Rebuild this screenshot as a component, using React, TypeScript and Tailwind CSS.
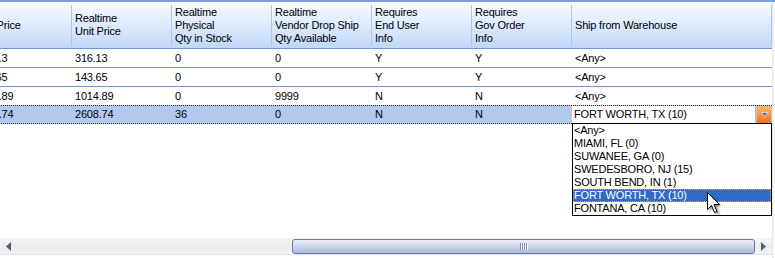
import React from "react";

const headers: string[][] = [
  ["Unit Price"],
  ["Realtime", "Unit Price"],
  ["Realtime", "Physical", "Qty in Stock"],
  ["Realtime", "Vendor Drop Ship", "Qty Available"],
  ["Requires", "End User", "Info"],
  ["Requires", "Gov Order", "Info"],
  ["Ship from Warehouse"],
];

const rows: string[][] = [
  ["316.13", "316.13", "0", "0", "Y", "Y", "<Any>"],
  ["143.65", "143.65", "0", "0", "Y", "Y", "<Any>"],
  ["1014.89", "1014.89", "0", "9999", "N", "N", "<Any>"],
];

const selected = ["2608.74", "2608.74", "36", "0", "N", "N"];

const warehouses = [
  "<Any>",
  "MIAMI, FL (0)",
  "SUWANEE, GA (0)",
  "SWEDESBORO, NJ (15)",
  "SOUTH BEND, IN (1)",
  "FORT WORTH, TX (10)",
  "FONTANA, CA (10)",
];

function Cursor() {
  return (
    <svg width="20" height="28" viewBox="0 0 20 28">
      <defs>
        <filter id="sh" x="-50%" y="-50%" width="200%" height="200%">
          <feGaussianBlur stdDeviation="1.3" />
        </filter>
      </defs>
      <path
        d="M3.5 3.5 L3.5 20.5 L7.5 16.5 L10.5 23.5 L13.5 22.5 L10.5 15.5 L15.5 15.5 Z"
        fill="#000"
        opacity="0.45"
        filter="url(#sh)"
      />
      <path
        d="M1.5 1.5 L1.5 18.5 L5.5 14.5 L8.5 21.5 L11 20.5 L8 13.5 L13.5 13.5 Z"
        fill="#fff"
        stroke="#000"
        strokeWidth="1"
        strokeLinejoin="miter"
      />
    </svg>
  );
}

export default function App() {
  return (
    <div className="relative w-[775px] h-[258px] bg-white overflow-hidden flex text-black text-[11px] tracking-[-0.2px] font-['Liberation_Sans',Arial,sans-serif]">
      <div className="w-[772px] h-full flex flex-col overflow-hidden">
        <div className="h-[2px] bg-[#7d9fd3] shrink-0" />

        {/* header */}
        <div className="h-[46px] shrink-0 flex ml-[-28px] bg-linear-to-b from-[#f8fbff] to-[#c2d8f8] border-b border-[#6e98d6] box-content">
          {headers.map((h, i) => (
            <div key={i} className={`flex items-center shrink-0 ${i === 6 ? "w-[200px]" : "w-[100px]"}`}>
              <div className="flex-1 pl-[3px] leading-[13px] whitespace-nowrap overflow-hidden">
                {h.map((l, j) => (
                  <div key={j}>{l}</div>
                ))}
              </div>
              <div className="w-px h-[41px] bg-[#a9c8f0]" />
            </div>
          ))}
        </div>

        {/* rows */}
        {rows.map((r, i) => (
          <div
            key={i}
            className={`h-[18px] shrink-0 flex ml-[-28px] box-content ${i < 2 ? "border-b border-[#6e98d6]" : ""}`}
          >
            {r.map((c, j) => (
              <div
                key={j}
                className={`shrink-0 pl-[3px] leading-[18px] whitespace-nowrap ${j === 6 ? "w-[200px]" : "w-[100px]"}`}
              >
                {c}
              </div>
            ))}
          </div>
        ))}

        {/* selected row */}
        <div className="h-[17px] shrink-0 flex ml-[-28px] box-content bg-[#b2c9ed] border-y border-dotted border-[#2b2b2b]">
          {selected.map((c, j) => (
            <div key={j} className="w-[100px] shrink-0 pl-[3px] leading-[17px] whitespace-nowrap">
              {c}
            </div>
          ))}
          <div className="w-[200px] shrink-0 flex">
            <div className="w-[183px] bg-white pl-[2px] leading-[17px] whitespace-nowrap">FORT WORTH, TX (10)</div>
            <div className="w-[2px] bg-[#a7c0ea]" />
            <div className="w-[14px] flex items-center justify-center bg-linear-to-b from-[#ffb762] to-[#f3720c]">
              <svg width="7" height="5" viewBox="0 0 7 5">
                <polygon points="0.5,0.5 6.5,0.5 3.5,4.5" fill="#3f66b8" stroke="#fff" strokeWidth="0.6" />
              </svg>
            </div>
          </div>
        </div>

        <div className="flex-1" />

        {/* horizontal scrollbar */}
        <div className="h-[16px] shrink-0 flex items-center bg-linear-to-b from-[#f7f4f4] via-[#ececec] to-[#f5f2f2]">
          <div className="w-[17px] h-full flex items-center justify-center">
            <svg width="5" height="9" viewBox="0 0 5 9">
              <polygon points="5,0 0,4.5 5,9" fill="#4b5e86" />
            </svg>
          </div>
          <div className="w-[275px]" />
          <div className="flex-1 h-[15px] border border-[#6878a3] rounded-[3px] bg-linear-to-b from-[#eaeff8] via-[#ccd7ec] to-[#a9badb] flex items-center justify-center">
            <div className="flex gap-[1px]">
              {[0, 1, 2, 3].map((k) => (
                <div key={k} className="w-px h-[7px] bg-[#7d8cb0] shadow-[1px_0_0_#f4f6fb]" />
              ))}
            </div>
          </div>
          <div className="w-[17px] h-full flex items-center justify-center">
            <svg width="5" height="9" viewBox="0 0 5 9">
              <polygon points="0,0 5,4.5 0,9" fill="#4b5e86" />
            </svg>
          </div>
        </div>
        <div className="h-[4px] shrink-0 border-t border-[#dbe5f5] bg-white" />
      </div>
      <div className="w-[3px] h-full flex flex-col">
        <div className="h-[2px] bg-[#7d9fd3]" />
        <div className="flex-1 bg-[#f8f6f6] border-l border-[#ebe8e8]" />
      </div>

      {/* dropdown list */}
      <div className="absolute left-[572px] top-[123px] w-[200px] h-[93px] border border-black bg-white">
        {warehouses.map((w, i) => (
          <div
            key={i}
            className={`h-[13px] leading-[13px] pl-[1px] whitespace-nowrap ${
              i === 5 ? "bg-[#316ac5] text-white outline outline-1 outline-dotted outline-[#e9a34a] -outline-offset-1" : ""
            }`}
          >
            {w}
          </div>
        ))}
      </div>

      <div className="absolute left-[706px] top-[191px]">
        <Cursor />
      </div>
    </div>
  );
}
